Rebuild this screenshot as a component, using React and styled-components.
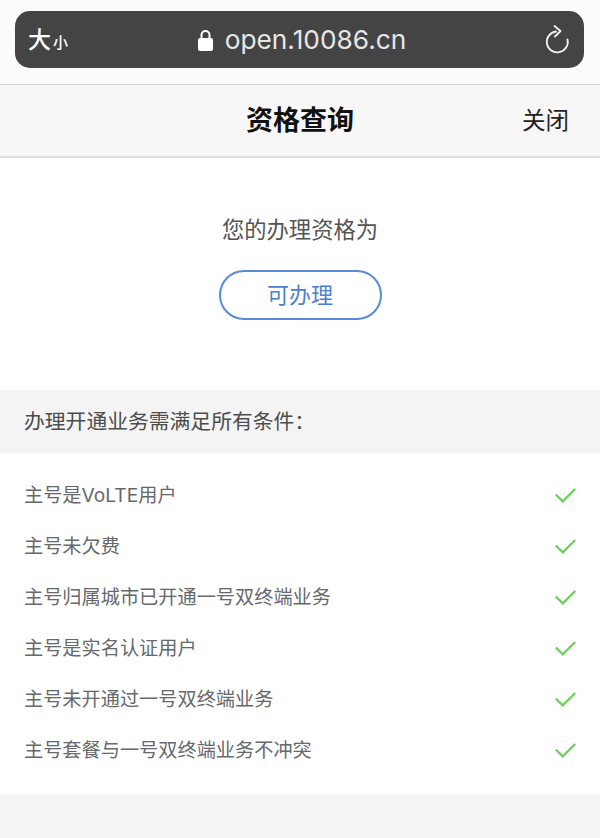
import styled, { createGlobalStyle } from 'styled-components';

const conditions = [
  '主号是VoLTE用户',
  '主号未欠费',
  '主号归属城市已开通一号双终端业务',
  '主号是实名认证用户',
  '主号未开通过一号双终端业务',
  '主号套餐与一号双终端业务不冲突',
];

const GlobalStyle = createGlobalStyle`
  html, body {
    margin: 0;
    padding: 0;
    background: #f4f4f4;
  }
  body {
    font-family: Inter, "Noto Sans CJK SC", sans-serif;
  }
`;

const LockIcon = () => (
  <svg width="15" height="22" viewBox="0 0 15 22">
    <path d="M3.500 10V6a4 4 0 0 1 8 0v4" fill="none" stroke="#fff" strokeWidth="2" />
    <rect x="0" y="9" width="15" height="13" rx="2" fill="#fff" />
  </svg>
);

const ReloadIcon = () => (
  <svg width="26" height="30" viewBox="0 0 26 30" fill="none" stroke="#f2f2f2" strokeWidth="1.800" strokeLinecap="round" strokeLinejoin="round">
    <path d="M12 6.500A10.500 10.500 0 1 0 23.500 14.500" />
    <path d="M10.500 1l6 5-5.500 5.500" />
  </svg>
);

const CheckIcon = () => (
  <svg width="21" height="15" viewBox="0 0 21 15" fill="none" stroke="#6fce5f" strokeWidth="2.300">
    <path d="M0.800 6.500l7 6.800L20.200 1" />
  </svg>
);

export default function App() {
  return (
    <Page>
      <GlobalStyle />
      <BrowserChrome>
        <AddressBar>
          <TextSize>
            大<small>小</small>
          </TextSize>
          <Url>
            <LockIcon />
            <span>open.10086.cn</span>
          </Url>
          <Reload>
            <ReloadIcon />
          </Reload>
        </AddressBar>
      </BrowserChrome>
      <NavBar>
        <NavTitle>资格查询</NavTitle>
        <CloseLink>关闭</CloseLink>
      </NavBar>
      <Result>
        <ResultLabel>您的办理资格为</ResultLabel>
        <StatusPill>可办理</StatusPill>
      </Result>
      <SectionHeader>办理开通业务需满足所有条件：</SectionHeader>
      <ConditionList>
        {conditions.map(text => (
          <Condition key={text}>
            <ConditionText>{text}</ConditionText>
            <CheckIcon />
          </Condition>
        ))}
      </ConditionList>
    </Page>
  );
}

const Page = styled.div`
  width: 600px;
  height: 838px;
  overflow: hidden;
  background: #f4f4f4;
`;

const BrowserChrome = styled.div`
  height: 85px;
  box-sizing: border-box;
  padding: 11px 16px 0 15px;
  background: #fbfbfb;
  border-bottom: 1px solid #cfcfcf;
`;

const AddressBar = styled.div`
  height: 57px;
  box-sizing: border-box;
  display: grid;
  grid-template-columns: 1fr auto 1fr;
  align-items: center;
  padding: 0 14px 0 13px;
  background: #444444;
  border-radius: 15px;
  color: #f4f4f4;
`;

const TextSize = styled.div`
  padding-bottom: 3px;
  font-size: 23px;
  font-weight: 500;
  color: #fff;
  small {
    font-size: 15px;
    margin-left: 2px;
  }
`;

const Url = styled.div`
  display: flex;
  align-items: center;
  gap: 12px;
  margin-left: 6px;
  font-size: 26.300px;
  color: #e6e6e6;
`;

const Reload = styled.div`
  display: flex;
  justify-content: flex-end;
`;

const NavBar = styled.div`
  position: relative;
  height: 73px;
  display: flex;
  align-items: center;
  justify-content: center;
  box-sizing: border-box;
  padding-bottom: 4px;
  background: #f7f7f7;
  border-bottom: 2px solid #dedede;
`;

const NavTitle = styled.div`
  font-size: 27px;
  font-weight: 700;
  color: #111;
`;

const CloseLink = styled.div`
  position: absolute;
  right: 31px;
  top: 17px;
  font-size: 23.500px;
  color: #222;
`;

const Result = styled.div`
  height: 232px;
  box-sizing: border-box;
  display: flex;
  flex-direction: column;
  align-items: center;
  padding-top: 57px;
  background: #fff;
`;

const ResultLabel = styled.div`
  font-size: 22.300px;
  line-height: 30px;
  color: #555;
`;

const StatusPill = styled.div`
  width: 163px;
  height: 50px;
  box-sizing: border-box;
  margin-top: 25px;
  padding-bottom: 5px;
  display: flex;
  align-items: center;
  justify-content: center;
  border: 2px solid #5a8ad6;
  border-radius: 25px;
  font-size: 22px;
  color: #4a7fd0;
`;

const SectionHeader = styled.div`
  height: 63px;
  box-sizing: border-box;
  display: flex;
  align-items: center;
  padding-left: 24px;
  padding-bottom: 4px;
  background: #f4f4f4;
  font-size: 20.800px;
  color: #4d4d4d;
`;

const ConditionList = styled.div`
  height: 341px;
  box-sizing: border-box;
  padding-top: 17px;
  background: #fff;
`;

const Condition = styled.div`
  height: 51px;
  display: flex;
  align-items: center;
  justify-content: space-between;
  padding: 0 24px;
`;

const ConditionText = styled.span`
  margin-bottom: 3px;
  font-size: 19.200px;
  color: #66686c;
`;
